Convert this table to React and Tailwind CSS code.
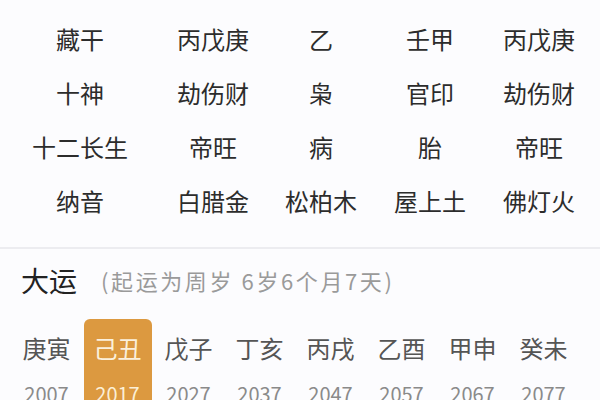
const rows = [
  ["藏干", "丙戊庚", "乙", "壬甲", "丙戊庚"],
  ["十神", "劫伤财", "枭", "官印", "劫伤财"],
  ["十二长生", "帝旺", "病", "胎", "帝旺"],
  ["纳音", "白腊金", "松柏木", "屋上土", "佛灯火"],
];

const dayun = [
  ["庚寅", "2007"],
  ["己丑", "2017"],
  ["戊子", "2027"],
  ["丁亥", "2037"],
  ["丙戌", "2047"],
  ["乙酉", "2057"],
  ["甲申", "2067"],
  ["癸未", "2077"],
];

export default function App() {
  return (
    <div
      className="h-[400px] w-[600px] overflow-hidden bg-[#fcfcfe]"
      style={{ fontFamily: '"Noto Sans CJK SC", "Noto Sans", sans-serif' }}
    >
      {/* pillar table */}
      <div className="pt-[12px]">
        {rows.map((r, i) => (
          <div
            key={i}
            className="grid h-[54px] grid-cols-[160px_106px_110px_108px_110px] items-center text-center text-[24px] text-[#2c2c2c]"
          >
            {r.map((cell, j) => (
              <span key={j}>{cell}</span>
            ))}
          </div>
        ))}
      </div>

      <div className="mt-[19px] h-[2px] bg-[#ececf0]" />

      {/* da yun */}
      <div className="flex items-center pl-[21px] pt-[10px]">
        <span className="text-[28px] text-[#222]">大运</span>
        <span className="ml-[24px] text-[22px] tracking-[2.6px] text-[#9a9a9a]">
          (起运为周岁 6岁6个月7天)
        </span>
      </div>

      <div className="mt-[18px] flex pl-[11px]">
        {dayun.map(([gz, year], i) => (
          <div key={i} className="flex w-[71px] justify-center">
            <div
              className={`flex w-[68px] flex-col items-center rounded-md pt-[10px] pb-4 ${
                i === 1 ? "bg-[#dc9940] text-[#fbf0dc]" : "text-[#555]"
              }`}
            >
              <span className="text-[24px] leading-[38px]">{gz}</span>
              <span
                className={`mt-[14px] text-[20px] leading-[26px] ${
                  i === 1 ? "text-[#fbefd6]" : "text-[#8a8a8a]"
                }`}
              >
                {year}
              </span>
            </div>
          </div>
        ))}
      </div>
    </div>
  );
}
